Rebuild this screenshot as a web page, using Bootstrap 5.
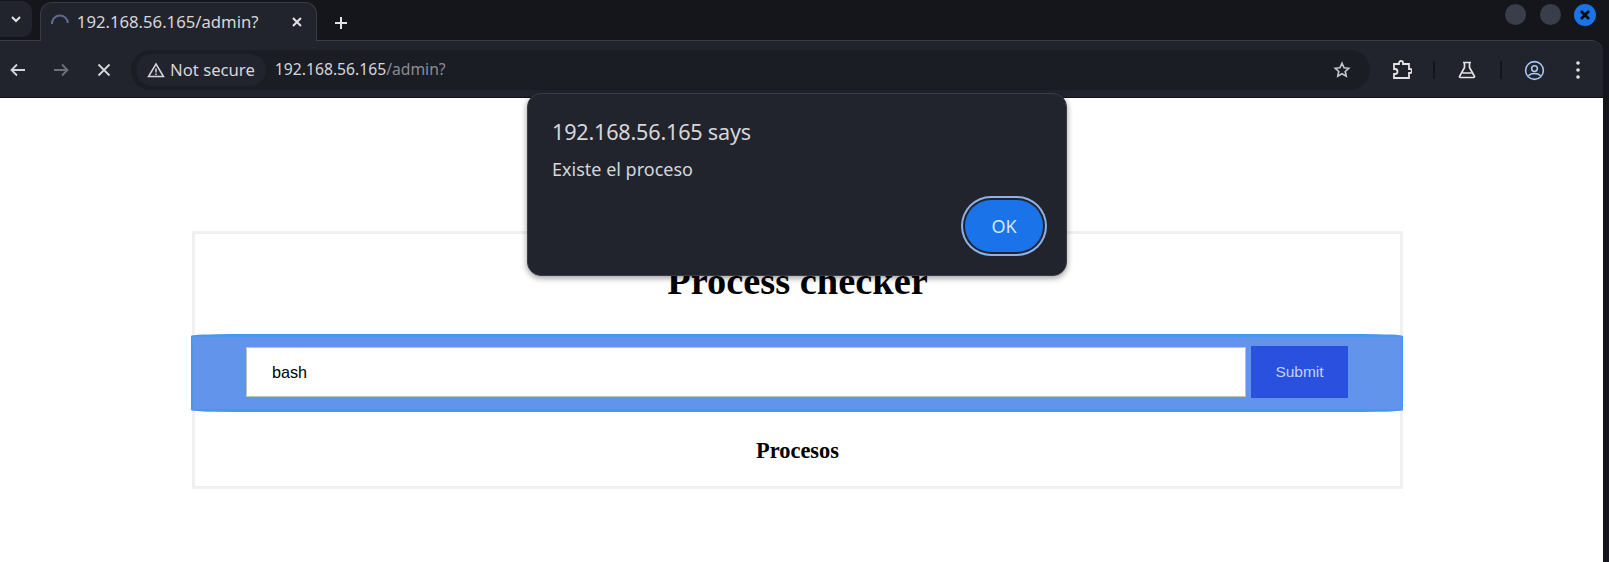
<!DOCTYPE html>
<html lang="en">
<head>
    <meta charset="UTF-8">
    <meta name="viewport" content="width=device-width, initial-scale=1.0">
    <title>192.168.56.165/admin?</title>
    <link href="https://cdn.jsdelivr.net/npm/bootstrap@5.3.0/dist/css/bootstrap.min.css" rel="stylesheet">
    <style>
        html, body { height: 100%; overflow: hidden; }
        body { background: #15161b; font-family: "Noto Sans", sans-serif; color: #e3e3e6; }
        .tab-strip { height: 41px; padding-right: 6px; }
        .tab-search { width: 32px; height: 36px; margin-top: 1px; margin-right: 8px; background: #22242d; border-radius: 0 10px 10px 0; }
        .tab-active { width: 277px; height: 39px; margin-top: 2px; padding: 0 13px 0 9px; background: #22242d; border: 1px solid #3a3c45; border-bottom: 0; border-radius: 12px 12px 0 0; font-size: 16.7px; color: #d5d6da; white-space: nowrap; }
        .tab-title { margin-left: 7px; width: 216px; }
        .new-tab { margin-left: 17px; }
        .win-btn { width: 21px; height: 21px; border-radius: 50%; background: #3a3e4b; margin-left: 14px; }
        .win-close { width: 22px; height: 22px; background: #1a73e8; margin-left: 13px; margin-right: 7px; }
        .tool-bar { height: 58px; background: #22242d; border-top: 1px solid #3a3c45; border-radius: 0 12px 0 0; margin-right: 6px; margin-top: -1px; padding-left: 3px; padding-top: 2px; border-bottom: 1px solid #111217; }
        .tool-ico { width: 30px; }
        .gap-nav { margin-right: 13px; }
        .omni { width: 1239px; height: 40px; margin-left: 12px; background: #1b1d24; border-radius: 20px; padding: 0 5px; flex-shrink: 0; }
        .sec-chip { height: 32px; background: #22242d; border-radius: 16px; padding: 0 11px; font-size: 16.7px; color: #d5d6da; gap: 5px; white-space: nowrap; }
        .omni-url { margin-left: 9px; font-size: 15.7px; color: #d5d6da; }
        .omni-url span { color: #8a8c94; }
        .star { margin-left: auto; margin-right: 14px; }
        .right-tools { margin-left: 15px; }
        .right-ico { width: 34px; }
        .right-ico.ico-flask, .right-ico.ico-user { margin-left: 15px; }
        .right-ico.ico-dots { margin-left: 10px; }
        .tool-sep { width: 2px; height: 18px; background: #14151a; margin-left: 14px; }
        .ico-flask + .tool-sep { margin-left: 16px; }
        .page-view { height: 464px; background: #fff; margin-right: 6px; padding-top: 133px; color: #000; }
        .proc-card { width: 1211px; height: 258px; margin-left: 192px; border: 3px solid #f0f0f0; }
        .proc-head { height: 99px; padding-top: 25px; font: bold 38.4px "Liberation Serif", serif; text-align: center; }
        .proc-band { height: 78px; margin: 1px -3px 0 -4px; padding-bottom: 2px; background: #6394eb; border-top: 3px solid #4797ef; border-bottom: 3px solid #4797ef; border-left: 2px solid #4797ef; border-right: 2px solid #4797ef; border-radius: 40px / 2px; padding-left: 53px; }
        .proc-input.form-control { width: 1000px; height: 50px; padding: 0 25px; background: #fff; border: 1px solid #c2c2c2; border-radius: 0; font: 16.2px "Liberation Sans", sans-serif; color: #000; box-shadow: none; }
        .proc-btn.btn { width: 97px; height: 52px; margin-left: 5px; padding: 0; background: #2a50df; border: 0; border-radius: 0; font: 15.5px "Liberation Sans", sans-serif; color: #c4d2f7; }
        .proc-foot { padding-top: 26px; font: bold 22.4px "Liberation Serif", serif; text-align: center; }
        .alert-box { position: absolute; left: 527px; top: 93px; width: 540px; height: 183px; padding: 23px 24px 0; background: #22242d; border: 1px solid #3a3c45; border-radius: 14px; box-shadow: 0 2px 6px rgba(0,0,0,.4); color: #d5d6da; z-index: 5; }
        .alert-title { font-size: 21.6px; line-height: 30px; letter-spacing: -.2px; white-space: nowrap; }
        .alert-msg { font-size: 18px; line-height: 24px; margin-top: 10px; }
        .alert-ok.btn { position: absolute; right: 23px; bottom: 23px; width: 78px; height: 52px; padding: 0; background: #1a73e8; border: 0; border-radius: 26px; box-shadow: 0 0 0 2px #22242d, 0 0 0 4px #8fb1e8; font-size: 18px; color: #d6e6fd; }
    </style>
</head>
<body>
    <div class="tab-strip d-flex align-items-start">
        <div class="tab-search d-flex align-items-center justify-content-center">
            <svg width="12" height="8" viewBox="0 0 12 8"><path d="M2 2l4 4 4-4" fill="none" stroke="#e3e3e6" stroke-width="2"/></svg>
        </div>
        <div class="tab-active d-flex align-items-center">
            <svg width="20" height="20" viewBox="0 0 20 20"><path d="M2 12A8 8 0 0 1 18 11" fill="none" stroke="#5b6a8c" stroke-width="2"/></svg>
            <span class="tab-title">192.168.56.165/admin?</span>
            <svg width="12" height="12" viewBox="0 0 12 12"><path d="M2 2l8 8M10 2l-8 8" stroke="#e3e3e6" stroke-width="2"/></svg>
        </div>
        <svg class="new-tab mt-3" width="14" height="14" viewBox="0 0 14 14"><path d="M7 1v12M1 7h12" stroke="#e3e3e6" stroke-width="2"/></svg>
        <div class="ms-auto d-flex mt-1">
            <div class="win-btn"></div>
            <div class="win-btn"></div>
            <div class="win-btn win-close d-flex align-items-center justify-content-center">
                <svg width="12" height="12" viewBox="0 0 12 12"><path d="M2 2l8 8M10 2l-8 8" stroke="#0b0c10" stroke-width="2.800"/></svg>
            </div>
        </div>
    </div>

    <div class="tool-bar d-flex align-items-center">
        <div class="tool-ico gap-nav d-flex justify-content-center">
            <svg width="16" height="14" viewBox="0 0 16 14"><path d="M15 7H2M7 1.500 1.500 7 7 12.500" fill="none" stroke="#d5d6da" stroke-width="1.800"/></svg>
        </div>
        <div class="tool-ico gap-nav d-flex justify-content-center">
            <svg width="16" height="14" viewBox="0 0 16 14"><path d="M1 7h13M9 1.500 14.500 7 9 12.500" fill="none" stroke="#6e7078" stroke-width="1.800"/></svg>
        </div>
        <div class="tool-ico d-flex justify-content-center">
            <svg width="14" height="14" viewBox="0 0 14 14"><path d="M1.500 1.500l11 11M12.500 1.500l-11 11" stroke="#d5d6da" stroke-width="1.800"/></svg>
        </div>
        <div class="omni d-flex align-items-center">
            <div class="sec-chip d-flex align-items-center">
                <svg width="18" height="16" viewBox="0 0 18 16"><path d="M9 2 16.500 14.500h-15ZM9 6.500v4M9 11.500v1.500" fill="none" stroke="#d5d6da" stroke-width="1.500"/></svg>
                Not secure
            </div>
            <div class="omni-url">192.168.56.165<span>/admin?</span></div>
            <svg class="star" width="18" height="18" viewBox="0 0 20 20"><path d="M10 2.500l2.300 5 5.200.6-3.900 3.500 1.100 5.300L10 14.200l-4.700 2.700 1.100-5.300L2.500 8.100l5.200-.6Z" fill="none" stroke="#c8c9ce" stroke-width="1.800"/></svg>
        </div>
        <div class="right-tools d-flex align-items-center">
            <div class="right-ico d-flex justify-content-center">
                <svg width="20" height="20" viewBox="0 0 20 20"><path d="M2 4h5V3a2 2 0 0 1 4 0v1h6v5h1a2 2 0 0 1 0 4h-1v5H2v-4h1a2.500 2.500 0 0 0 0-5H2Z" fill="none" stroke="#e3e3e6" stroke-width="1.800"/></svg>
            </div>
            <div class="tool-sep"></div>
            <div class="right-ico ico-flask d-flex justify-content-center">
                <svg width="18" height="18" viewBox="0 0 18 18"><path d="M5 1.500h8M6.500 1.500v5L1.600 15.300a.8.8 0 0 0 .7 1.200h13.400a.8.8 0 0 0 .7-1.200L11.500 6.500v-5M4.500 12h9" fill="none" stroke="#e3e3e6" stroke-width="1.700"/></svg>
            </div>
            <div class="tool-sep"></div>
            <div class="right-ico ico-user d-flex justify-content-center">
                <svg width="21" height="21" viewBox="0 0 22 22"><circle cx="11" cy="11" r="9.300" fill="none" stroke="#a8c7fa" stroke-width="1.600"/><circle cx="11" cy="9" r="3" fill="none" stroke="#a8c7fa" stroke-width="1.600"/><path d="M4.500 16.500c3-3 10-3 13 0" fill="none" stroke="#a8c7fa" stroke-width="1.600"/></svg>
            </div>
            <div class="right-ico ico-dots d-flex justify-content-center">
                <svg width="4" height="18" viewBox="0 0 4 18"><circle cx="2" cy="2" r="1.800" fill="#e3e3e6"/><circle cx="2" cy="9" r="1.800" fill="#e3e3e6"/><circle cx="2" cy="16" r="1.800" fill="#e3e3e6"/></svg>
            </div>
        </div>
    </div>

    <div class="page-view">
        <div class="proc-card">
            <div class="proc-head">Process checker</div>
            <form class="proc-band d-flex align-items-center">
                <input class="proc-input form-control" type="text" value="bash">
                <button class="proc-btn btn" type="button">Submit</button>
            </form>
            <div class="proc-foot">Procesos</div>
        </div>
    </div>

    <div class="alert-box">
        <div class="alert-title">192.168.56.165 says</div>
        <div class="alert-msg">Existe el proceso</div>
        <button class="alert-ok btn" type="button">OK</button>
    </div>
</body>
</html>
